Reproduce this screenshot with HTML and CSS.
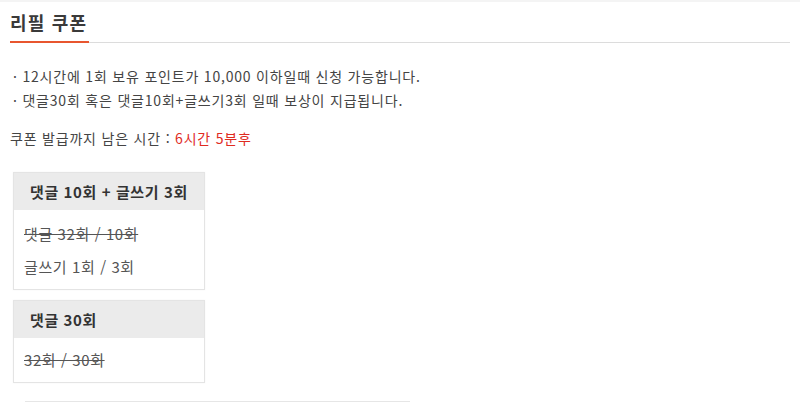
FILE: index.html
```html
<!DOCTYPE html>
<html lang="ko">
<head>
<meta charset="utf-8">
<link rel="stylesheet" href="styles.css">
</head>
<body>
<div class="page">
  <div class="title-bar">
    <h2 class="title">리필 쿠폰</h2>
  </div>
  <ul class="notice">
    <li>· 12시간에 1회 보유 포인트가 10,000 이하일때 신청 가능합니다.</li>
    <li>· 댓글30회 혹은 댓글10회+글쓰기3회 일때 보상이 지급됩니다.</li>
  </ul>
  <p class="timer">쿠폰 발급까지 남은 시간 : <span class="red">6시간 5분후</span></p>
  <div class="card">
    <div class="card-head">댓글 10회 + 글쓰기 3회</div>
    <div class="card-body">
      <div class="row done">댓글 32회 / 10회</div>
      <div class="row">글쓰기 1회 / 3회</div>
    </div>
  </div>
  <div class="card">
    <div class="card-head">댓글 30회</div>
    <div class="card-body short">
      <div class="row done">32회 / 30회</div>
    </div>
  </div>
  <div class="bottom-line"></div>
</div>
</body>
</html>
```

FILE: styles.css
```css
html, body {
  margin: 0;
  padding: 0;
  background: #fff;
}
body {
  font-family: "Noto Sans CJK KR", "Noto Sans", sans-serif;
  color: #444;
  border-top: 2px solid #f4f4f4;
}
.page {
  padding: 0 10px;
}
.title-bar {
  display: flex;
  border-bottom: 1px solid #dcdcdc;
}
.title {
  margin: 0 0 -1px 0;
  padding: 8px 2px 7px 0;
  font-size: 18px;
  line-height: 24px;
  font-weight: 700;
  color: #3a3a3a;
  border-bottom: 2px solid #e8562f;
  letter-spacing: 1.2px;
}
.notice {
  list-style: none;
  margin: 21px 0 0 3px;
  padding: 0;
  font-size: 14px;
  line-height: 24px;
  color: #444;
  letter-spacing: 0.8px;
}
.timer {
  margin: 14px 0 0 0;
  font-size: 14px;
  line-height: 24px;
  color: #444;
  letter-spacing: 0.8px;
}
.red {
  color: #e02b1f;
}
.card {
  width: 190px;
  margin: 0 0 10px 3px;
  border: 1px solid #e4e4e4;
  box-shadow: 0 0 2px rgba(0,0,0,0.04);
}
.timer + .card {
  margin-top: 22px;
}
.card-head {
  background: #ebebeb;
  height: 37px;
  line-height: 37px;
  padding-left: 16px;
  font-size: 15px;
  font-weight: 700;
  color: #333;
  letter-spacing: 0.6px;
}
.card-body {
  padding: 7px 0 6px 10px;
}
.card-body.short {
  padding: 5px 0 6px 10px;
}
.row {
  line-height: 33px;
  font-size: 15px;
  color: #555;
  letter-spacing: 0.6px;
}
.row.done {
  text-decoration: line-through;
}
.bottom-line {
  margin: 18px 0 0 15px;
  width: 385px;
  border-top: 1px solid #e6e6e6;
}
```
